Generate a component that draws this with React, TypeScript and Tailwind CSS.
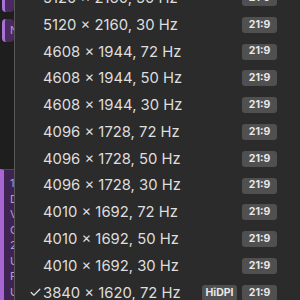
import { Check } from "lucide-react";

const modes = [
  { res: "5120 × 2160", hz: 50 },
  { res: "5120 × 2160", hz: 30 },
  { res: "4608 × 1944", hz: 72 },
  { res: "4608 × 1944", hz: 50 },
  { res: "4608 × 1944", hz: 30 },
  { res: "4096 × 1728", hz: 72 },
  { res: "4096 × 1728", hz: 50 },
  { res: "4096 × 1728", hz: 30 },
  { res: "4010 × 1692", hz: 72 },
  { res: "4010 × 1692", hz: 50 },
  { res: "4010 × 1692", hz: 30 },
  { res: "3840 × 1620", hz: 72, current: true, hidpi: true },
];

function Badge({ label }: { label: string }) {
  return (
    <span className="h-[16px] w-[35px] rounded-[3px] bg-[#505050] text-[10.5px] font-bold text-[#e8e8e8] flex items-center justify-center leading-none">
      {label}
    </span>
  );
}

export default function App() {
  return (
    <div className="w-[300px] h-[300px] overflow-hidden flex bg-[#1e1e1e] font-['Inter','Liberation_Sans',sans-serif]">
      {/* window behind the menu */}
      <div className="w-[14px] shrink-0 flex flex-col">
        <div className="h-[12px] ml-[2px] rounded-b-[4px] bg-[#4b2a5e] border-l-[3px] border-[#a872d6]" />
        <div className="h-[23px] mt-[7px] ml-[2px] rounded-[4px] bg-[#4b2a5e] border-l-[3px] border-[#a872d6] text-[#b895d6] text-[11px] leading-[23px] pl-[5px] overflow-hidden">
          N
        </div>
        <div className="flex-1" />
        <div className="h-[131px] bg-[#3f2452] border-l-[4px] border-t border-t-[#5d3a72] border-l-[#a766d2] overflow-hidden pt-[6px] pl-[6px] text-[#b79bd0] text-[11px] leading-[15.5px]">
          <div>1</div>
          <div>D</div>
          <div>V</div>
          <div>C</div>
          <div>2</div>
          <div>U</div>
          <div>F</div>
          <div>U</div>
        </div>
      </div>

      {/* resolution menu */}
      <div className="flex-1 bg-[#2b2b2b] border-l border-[#585858]">
        <div className="-mt-[15.4px]">
          {modes.map((m, i) => (
            <div key={i} className="h-[26.8px] flex items-center text-[14.8px] text-[#dedede]">
              <span className="w-[28px] flex justify-end pr-[1px]">
                {m.current && <Check size={13} strokeWidth={2.2} className="text-[#dedede]" />}
              </span>
              <span>
                {m.res}, {m.hz} Hz
              </span>
              <span className="flex-1" />
              <span className="flex gap-[5px] mr-[23px]">
                {m.hidpi && <Badge label="HiDPI" />}
                <Badge label="21:9" />
              </span>
            </div>
          ))}
        </div>
      </div>
    </div>
  );
}
